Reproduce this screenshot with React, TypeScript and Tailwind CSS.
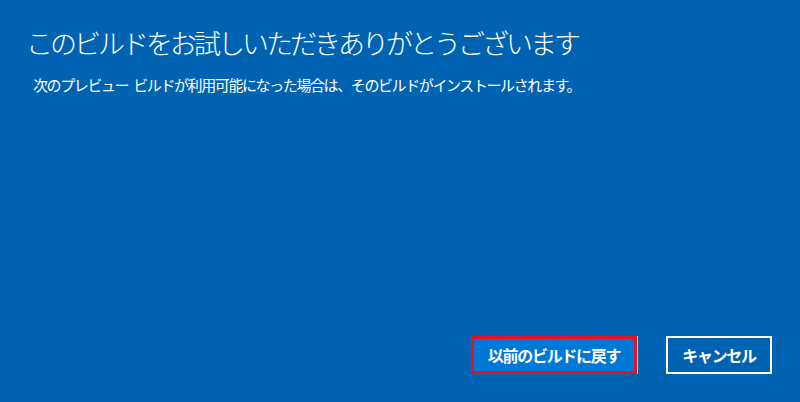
export default function App() {
  const font = { fontFamily: '"Noto Sans CJK JP", "Noto Sans", sans-serif' }

  return (
    <div
      className="flex h-[402px] w-[800px] flex-col bg-[#0063b1] text-white"
      style={font}
    >
      <h1 className="mt-[27px] pl-[26px] text-[27px] font-light leading-[31px] tracking-[-3px]">
        このビルドをお試しいただきありがとうございます
      </h1>
      <p className="mt-[18px] pl-[33px] text-[15px] leading-[18px] tracking-[-1.4px]">
        次のプレビュー<span className="ml-[5px]">ビルドが利用可能になった場合は、そのビルドがインストールされます。</span>
      </p>

      <div className="mt-auto mb-[28px] mr-[28px] flex justify-end gap-[29px]">
        <button
          type="button"
          className="flex h-[38px] w-[166px] items-center justify-center border-[3px] border-[#e81123] bg-[#0078d7] text-[16px] font-bold tracking-[-1.3px] shadow-[1px_0_0_#c8d6e6]"
        >
          以前のビルドに戻す
        </button>
        <button
          type="button"
          className="flex h-[38px] w-[106px] items-center justify-center border-2 border-white text-[16px] font-bold tracking-[-1.3px]"
        >
          キャンセル
        </button>
      </div>
    </div>
  )
}
